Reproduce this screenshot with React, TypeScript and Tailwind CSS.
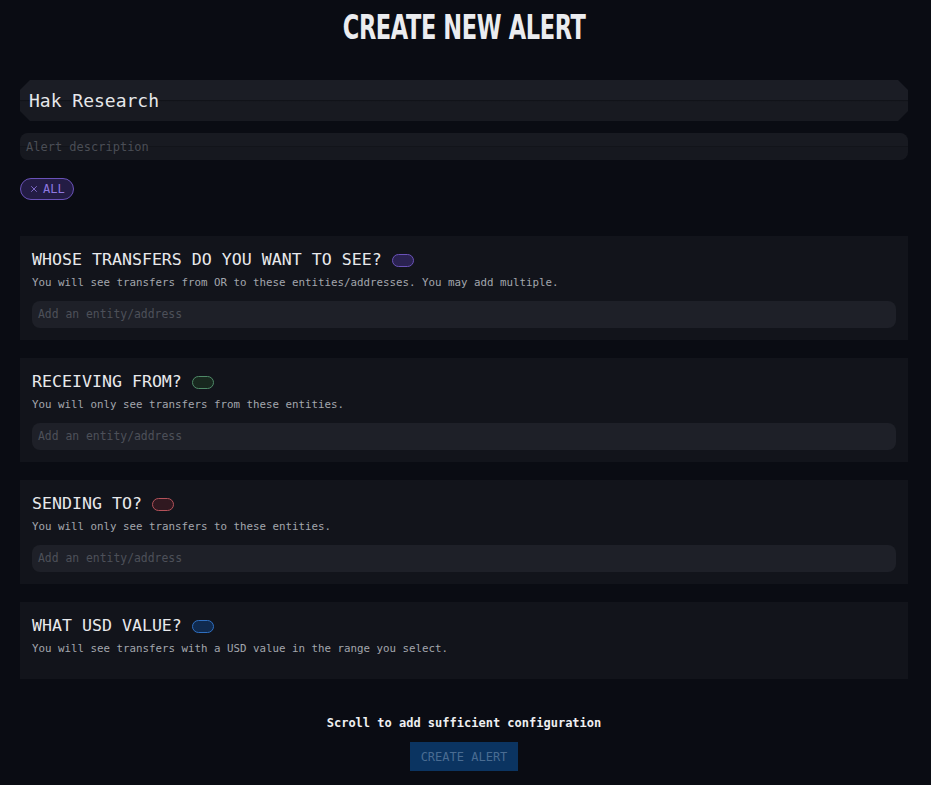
import { X } from "lucide-react";

type Section = {
  title: string;
  desc: string;
  badge: string;
  input?: boolean;
};

const sections: Section[] = [
  {
    title: "WHOSE TRANSFERS DO YOU WANT TO SEE?",
    desc: "You will see transfers from OR to these entities/addresses. You may add multiple.",
    badge: "border-[#6a52b8] bg-[#2a2250]",
    input: true,
  },
  {
    title: "RECEIVING FROM?",
    desc: "You will only see transfers from these entities.",
    badge: "border-[#4f8a68] bg-[#18281f]",
    input: true,
  },
  {
    title: "SENDING TO?",
    desc: "You will only see transfers to these entities.",
    badge: "border-[#b4525a] bg-[#301820]",
    input: true,
  },
  {
    title: "WHAT USD VALUE?",
    desc: "You will see transfers with a USD value in the range you select.",
    badge: "border-[#2f6fc0] bg-[#102a4e]",
  },
];

function ConfigSection({ s }: { s: Section }) {
  return (
    <div className={`bg-[#12141b] px-3 pt-[13px] ${s.input ? "pb-[12px]" : "pb-[21px]"}`}>
      <div className="flex items-center gap-[10px] h-[22px]">
        <span className="text-[16.6px] leading-none text-[#e8e9ec]">{s.title}</span>
        <span className={`w-[22px] h-[13px] rounded-full border ${s.badge}`} />
      </div>
      <p className="mt-[3px] text-[10.8px] leading-[18px] text-[#a3a6ad]">{s.desc}</p>
      {s.input && (
        <div className="mt-[9px] h-[27px] rounded-lg bg-[#1e2028] flex items-center px-[6px]">
          <span className="text-[11.4px] text-[#4d5059]">Add an entity/address</span>
        </div>
      )}
    </div>
  );
}

export default function App() {
  return (
    <div className="min-h-[785px] bg-[#0a0c13] pl-5 pr-[23px] font-['DejaVu_Sans_Mono','Liberation_Mono',monospace]">
      <div className="flex justify-center pt-[7px] h-[80px]">
        <h1 className="font-['Liberation_Sans_Narrow','DejaVu_Sans_Condensed',sans-serif] font-bold text-[34px] leading-[40px] text-[#ebecef] tracking-[-0.5px] scale-x-[0.735] whitespace-nowrap">
          CREATE NEW ALERT
        </h1>
      </div>

      <div className="h-[41px] flex items-center px-[9px] bg-[linear-gradient(to_bottom,#1b1d25_0%,#1b1d25_49%,#111319_50%,#181a21_53%,#181a21_100%)] [clip-path:polygon(10px_0,calc(100%-10px)_0,100%_10px,100%_calc(100%-10px),calc(100%-10px)_100%,10px_100%,0_calc(100%-10px),0_10px)]">
        <span className="text-[18px] text-[#e6e7ea]">Hak Research</span>
      </div>

      <div className="mt-[12px] h-[27px] flex items-center px-[6px] rounded-lg bg-[linear-gradient(to_bottom,#181a21_0%,#181a21_48%,#12141a_50%,#16181f_54%,#16181f_100%)]">
        <span className="text-[12px] text-[#4a4d55]">Alert description</span>
      </div>

      <div className="mt-[18px] flex">
        <button className="h-[22px] px-[8px] rounded-full border border-[#6a52b8] bg-[#231c44] flex items-center gap-[4px] text-[12px] text-[#8f78e0]">
          <X size={10} strokeWidth={2} />
          ALL
        </button>
      </div>

      <div className="mt-[36px] flex flex-col gap-[18px]">
        {sections.map((s) => (
          <ConfigSection key={s.title} s={s} />
        ))}
      </div>

      <div className="mt-[35px] flex flex-col items-center">
        <p className="text-[12px] font-bold text-[#eeeff1]">Scroll to add sufficient configuration</p>
        <button className="mt-[10px] h-[29px] px-[11px] bg-[#0b3461] text-[12px] text-[#4a6c92]">
          CREATE ALERT
        </button>
      </div>
    </div>
  );
}
